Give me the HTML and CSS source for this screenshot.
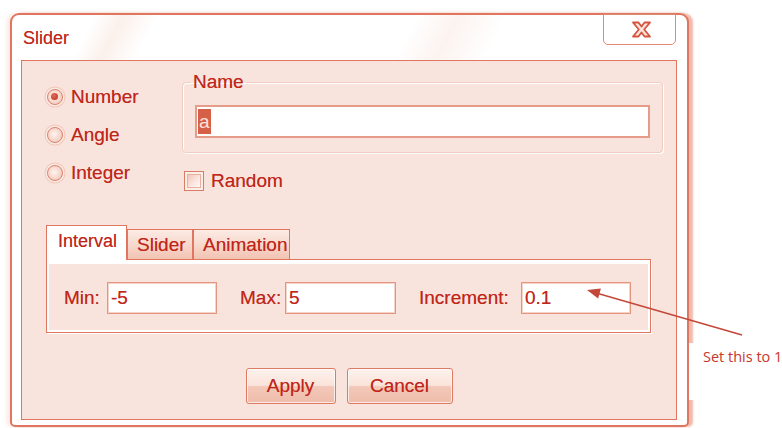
FILE: index.html
```html
<!DOCTYPE html>
<html lang="en">
<head>
<meta charset="utf-8">
<title>Slider</title>
<link rel="stylesheet" href="styles.css">
</head>
<body>
<div class="window">
  <div class="titlebar"><span class="title">Slider</span></div>
  <div class="close">
    <svg width="21" height="17" viewBox="0 0 21 17">
      <path d="M2 1.5H7.5L10.5 5.5L13.5 1.5H19L13.2 8.5L19 15.5H13.5L10.5 11.5L7.5 15.5H2L7.8 8.5Z" fill="#fce4dc" stroke="#d4563f" stroke-width="1.8" stroke-linejoin="round"/>
    </svg>
  </div>
  <div class="panel">
    <div class="top">
      <div class="radios">
        <div class="radio"><span class="dot on"></span>Number</div>
        <div class="radio"><span class="dot"></span>Angle</div>
        <div class="radio"><span class="dot"></span>Integer</div>
      </div>
      <div class="right">
        <fieldset class="group">
          <legend>Name</legend>
          <div class="namefield"><span class="sel">a</span></div>
        </fieldset>
        <div class="check"><span class="box"></span>Random</div>
      </div>
    </div>
    <div class="tabs">
      <div class="tab active t1">Interval</div>
      <div class="tab t2">Slider</div>
      <div class="tab t3">Animation</div>
    </div>
    <div class="tabpane">
      <span class="lbl">Min:</span>
      <div class="field">-5</div>
      <span class="lbl spaced">Max:</span>
      <div class="field">5</div>
      <span class="lbl spaced">Increment:</span>
      <div class="field">0.1</div>
    </div>
    <div class="buttons">
      <div class="btn apply">Apply</div>
      <div class="btn cancel">Cancel</div>
    </div>
  </div>
</div>
<svg class="arrow" width="782" height="428" viewBox="0 0 782 428">
  <line x1="742" y1="335" x2="598" y2="293.5" stroke="#c4483a" stroke-width="1.6"/>
  <polygon points="587,290 600.9,288.6 598.1,298.4" fill="#c4483a"/>
</svg>
<div class="note">Set this to 1</div>
</body>
</html>
```

FILE: styles.css
```css
html, body {
  margin: 0;
}

body {
  position: relative;
  width: 782px;
  height: 428px;
  overflow: hidden;
  box-sizing: border-box;
  padding: 13px 0 0 10px;
  background: #fff;
  font-family: "Liberation Sans", Arial, sans-serif;
  font-size: 19px;
  line-height: 22px;
  color: #c0261a;
  text-shadow: 0 0 0.6px rgba(192, 38, 26, 0.6);
}

/* dialog frame */
.window {
  position: relative;
  width: 679px;
  height: 414px;
  box-sizing: border-box;
  border: 2px solid #e07660;
  border-radius: 9px 9px 5px 5px;
  background: #fff;
  box-shadow: 4px 0 2px rgba(232, 150, 128, 0.65), -3px 0 4px rgba(240, 190, 175, 0.35);
}

.titlebar {
  height: 45px;
  box-sizing: border-box;
  padding: 12px 0 0 11px;
  font-size: 18px;
  border-radius: 7px 7px 0 0;
  background:
    linear-gradient(118deg,
      rgba(255, 255, 255, 0) 12%,
      rgba(246, 222, 212, 0.45) 16%,
      rgba(255, 255, 255, 0) 21%,
      rgba(255, 255, 255, 0) 58%,
      rgba(247, 226, 217, 0.4) 64%,
      rgba(255, 255, 255, 0) 71%);
}

.close {
  position: absolute;
  top: -1px;
  right: 11px;
  width: 73px;
  height: 31px;
  box-sizing: border-box;
  border: 1px solid #e08a76;
  border-radius: 0 0 5px 5px;
  background: #fff;
  display: flex;
  align-items: center;
  justify-content: center;
  padding: 0 0 0 4px;
}

/* main client area */
.panel {
  margin: 0 10px 0 9px;
  height: 360px;
  box-sizing: border-box;
  border: 1px solid #e07660;
  background: #f8e4dc;
}

.top {
  display: flex;
}

.radios {
  width: 160px;
  box-sizing: border-box;
  padding: 17px 0 0 25px;
}

.radio {
  display: flex;
  align-items: center;
  gap: 8px;
  height: 38px;
}

.dot {
  position: relative;
  width: 16px;
  height: 16px;
  box-sizing: border-box;
  border-radius: 50%;
  border: 1.5px solid #dc8470;
  background: radial-gradient(circle at 45% 45%, #fdf4f0 0%, #f7d9cf 50%, #eebcab 100%);
  box-shadow: 0 0 0 1.5px rgba(251, 236, 230, 0.95), 0 0 0 2.5px rgba(236, 170, 150, 0.5);
}

.dot.on::after {
  content: "";
  position: absolute;
  left: 3px;
  top: 3px;
  width: 7px;
  height: 7px;
  border-radius: 50%;
  background: radial-gradient(circle at 40% 35%, #e2685a, #bf2e1e);
}

.right {
  width: 481px;
  padding-top: 10px;
}

.group {
  margin: 0;
  min-width: 0;
  padding: 12px 12px 14px;
  border: 1px solid #f0cdc1;
  border-radius: 4px;
  box-shadow: 1px 1px 0 #fff, inset 1px 1px 0 #fff;
}

.group legend {
  padding: 0 2px;
  margin-left: -4px;
  line-height: 22px;
}

.namefield {
  height: 33px;
  box-sizing: border-box;
  border: 2px solid #e69c88;
  background: #fff;
  padding: 2px 0 0 1px;
}

.sel {
  display: inline-block;
  padding: 0 1px;
  line-height: 25px;
  background: #d65f48;
  color: #fbe2da;
  text-shadow: none;
}

.check {
  display: flex;
  align-items: center;
  gap: 7px;
  height: 22px;
  margin: 17px 0 0 2px;
}

.box {
  width: 20px;
  height: 20px;
  box-sizing: border-box;
  border: 1px solid #d97d66;
  background: linear-gradient(135deg, #eeb7a6 0%, #fbe6df 55%, #fff 90%);
  box-shadow: inset 0 0 0 2px #fcefea, inset 0 0 0 3px #eab0a0;
}

/* tab strip */
.tabs {
  display: flex;
  align-items: flex-end;
  height: 34px;
  margin: 33px 0 0 24px;
}

.tab {
  height: 30px;
  box-sizing: border-box;
  border: 1px solid #e07660;
  border-bottom: none;
  padding: 4px 0 0 9px;
  background: linear-gradient(#fcebe4 0%, #f8d9ce 50%, #f1c2b2 100%);
  white-space: nowrap;
}

.tab.active {
  position: relative;
  z-index: 1;
  height: 35px;
  margin-bottom: -1px;
  padding: 4px 0 0 11px;
  background: #fff;
  font-size: 18px;
}

.t1 { width: 81px; }
.t2 { width: 66px; }
.t3 { width: 97px; }

.tabpane {
  margin: 0 25px 0 24px;
  height: 74px;
  box-sizing: border-box;
  border: 1px solid #e07660;
  box-shadow: inset 2px 4px 0 #fff, inset -2px -2px 0 #fff, 1px 1px 0 #fff;
  padding: 22px 0 0 17px;
  display: grid;
  grid-template-columns: 43px 110px 68px 111px 125px 110px;
  grid-template-rows: 32px;
  align-items: center;
}

.lbl {
  white-space: nowrap;
}

.lbl.spaced {
  padding-left: 23px;
}

.field {
  height: 32px;
  box-sizing: border-box;
  border: 1px solid #e39580;
  box-shadow: inset 0 0 0 1px #f6d3c8;
  background: #fff;
  padding-left: 3px;
  line-height: 30px;
}

/* dialog buttons */
.buttons {
  display: flex;
  justify-content: center;
  gap: 11px;
  margin-top: 35px;
}

.btn {
  height: 36px;
  box-sizing: border-box;
  border: 1px solid #dc7a62;
  border-radius: 3px;
  background: linear-gradient(#fdf2ed 0%, #fae3da 48%, #f3c8b9 52%, #efbcaa 100%);
  box-shadow: inset 0 0 0 1px rgba(255, 255, 255, 0.7);
  text-align: center;
  line-height: 33px;
}

.apply { width: 90px; }
.cancel { width: 106px; }

/* annotation */
.arrow {
  position: absolute;
  left: 0;
  top: 0;
  pointer-events: none;
}

.note {
  position: absolute;
  left: 689px;
  top: 343px;
  width: 93px;
  height: 57px;
  box-sizing: border-box;
  padding: 4px 0 0 14px;
  background: #fff;
  font-family: "Open Sans", "Noto Sans", sans-serif;
  font-size: 14.5px;
  line-height: 20px;
  color: #c8372a;
  text-shadow: none;
  white-space: nowrap;
}
```
